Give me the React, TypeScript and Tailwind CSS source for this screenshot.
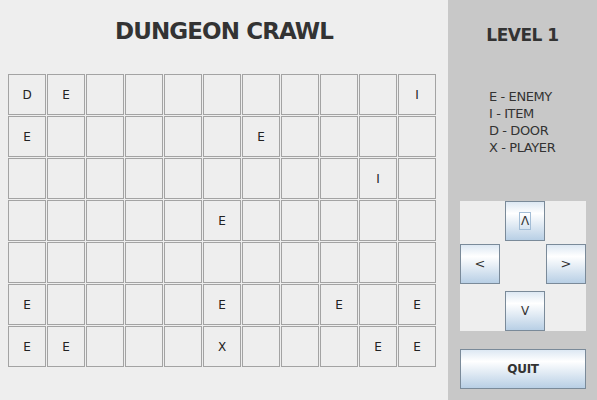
const board = [
  ['D', 'E', '', '', '', '', '', '', '', '', 'I'],
  ['E', '', '', '', '', '', 'E', '', '', '', ''],
  ['', '', '', '', '', '', '', '', '', 'I', ''],
  ['', '', '', '', '', 'E', '', '', '', '', ''],
  ['', '', '', '', '', '', '', '', '', '', ''],
  ['E', '', '', '', '', 'E', '', '', 'E', '', 'E'],
  ['E', 'E', '', '', '', 'X', '', '', '', 'E', 'E'],
]

const font = "font-['DejaVu_Sans',sans-serif]"
const btn =
  'border border-[#7a8a99] bg-[linear-gradient(to_bottom,#dde8f3_0%,#ffffff_30%,#b8cfe5_100%)] text-[#333] flex items-center justify-center'

export default function App() {
  return (
    <div className={`w-[597px] h-[400px] flex bg-[#eeeeee] ${font}`}>
      <div className="w-[448px] pl-[8px]">
        <div className="h-[74px] pt-[18px] pr-[8px] text-center">
          <h1 className="text-[23px] leading-[27px] font-bold text-[#333] tracking-[-0.9px]">
            DUNGEON CRAWL
          </h1>
        </div>
        <div className="grid grid-cols-[repeat(11,38px)] grid-rows-[repeat(7,41px)] gap-px">
          {board.flat().map((c, i) => (
            <div
              key={i}
              className="border border-[#a3a3a3] flex items-center justify-center text-[12px] text-[#222]"
            >
              {c}
            </div>
          ))}
        </div>
      </div>

      <div className="flex-1 bg-[#c8c8c8] flex flex-col">
        <div className="h-[88px] pt-[25px] text-center">
          <h2 className="text-[17px] leading-[20px] font-bold text-[#333] tracking-[-0.5px]">LEVEL 1</h2>
        </div>
        <div className="pl-[41px] text-[13px] leading-[17px] text-[#333] tracking-[-0.4px]">
          <p>E - ENEMY</p>
          <p>I - ITEM</p>
          <p>D - DOOR</p>
          <p>X - PLAYER</p>
        </div>

        <div className="mt-[45px] ml-[12px] w-[126px] h-[130px] bg-[#eeeeee] grid grid-cols-[45px_41px_40px] grid-rows-[43px_47px_40px]">
          <div />
          <div className="flex items-start">
            <button className={`${btn} w-[40px] h-[40px]`}>
              <span className="border border-[#a3bdd6] px-[1px] text-[12px] leading-[16px]">Λ</span>
            </button>
          </div>
          <div />
          <div>
            <button className={`${btn} w-[40px] h-[40px] text-[13px]`}>&lt;</button>
          </div>
          <div />
          <div>
            <button className={`${btn} w-[40px] h-[40px] text-[13px]`}>&gt;</button>
          </div>
          <div />
          <div>
            <button className={`${btn} w-[40px] h-[40px] text-[12px]`}>V</button>
          </div>
          <div />
        </div>

        <button className={`${btn} mt-[18px] ml-[12px] w-[126px] h-[40px] text-[12px] font-bold tracking-[-0.3px]`}>
          QUIT
        </button>
      </div>
    </div>
  )
}
